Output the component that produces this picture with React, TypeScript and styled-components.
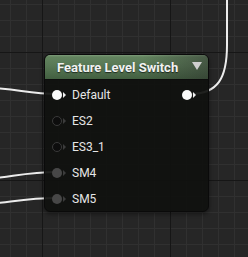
import React from "react";
import styled, { createGlobalStyle } from "styled-components";

const Global = createGlobalStyle`
  html, body { margin: 0; padding: 0; background: #262626; }
  body { font-family: Roboto, "Noto Sans", sans-serif; }
`;

const Canvas = styled.div`
  position: relative;
  width: 248px;
  height: 257px;
  overflow: hidden;
  background-color: #262626;
  background-image:
    linear-gradient(to right, #161616 1px, transparent 1px),
    linear-gradient(to bottom, #161616 1px, transparent 1px),
    linear-gradient(to right, #303030 1px, transparent 1px),
    linear-gradient(to bottom, #303030 1px, transparent 1px);
  background-size: 128px 128px, 128px 128px, 16px 16px, 16px 16px;
  background-position: 42px 0, 0 52px, 10px 0, 0 4px;
`;

const Wires = styled.svg`
  position: absolute;
  left: 0;
  top: 0;
  width: 248px;
  height: 257px;
  pointer-events: none;
`;

const Node = styled.div`
  position: absolute;
  left: 44px;
  top: 54px;
  width: 165px;
  height: 158px;
  box-sizing: border-box;
  border-radius: 6px;
  border: 1px solid #0a0a0a;
  background: rgba(16, 17, 15, 0.93);
  box-shadow: 0 2px 4px rgba(0, 0, 0, 0.45);
  overflow: hidden;
  display: flex;
  flex-direction: column;
`;

const Header = styled.div`
  height: 24px;
  flex: none;
  display: flex;
  align-items: center;
  justify-content: space-between;
  padding: 0 6px 0 12px;
  background:
    linear-gradient(to right, rgba(0,0,0,0) 60%, rgba(40,40,40,0.45) 100%),
    linear-gradient(to bottom, #7d9b79 0px, #62835e 2px, #587855 45%, #425f40 100%);
  border-bottom: 1px solid #0c0c0c;
`;

const Title = styled.span`
  color: #f2f2f2;
  font-weight: 700;
  font-size: 13px;
  text-shadow: 0 1px 1px rgba(0,0,0,0.6);
`;

const Caret = styled.span`
  width: 0;
  height: 0;
  border-left: 5px solid transparent;
  border-right: 5px solid transparent;
  border-top: 8px solid #cfcfcf;
  margin-top: -3px;
`;

const Body = styled.div`
  padding-top: 2px;
  display: flex;
  flex-direction: column;
`;

const Row = styled.div`
  height: 26px;
  display: flex;
  align-items: center;
  justify-content: space-between;
  padding: 0 12px 0 7px;
`;

const PinGroup = styled.div`
  display: flex;
  align-items: center;
`;

type PinKind = "on" | "hollow" | "gray";

const Dot = styled.span<{ $kind: PinKind }>`
  width: 10px;
  height: 10px;
  box-sizing: border-box;
  border-radius: 50%;
  background: ${p => (p.$kind === "on" ? "#fafafa" : p.$kind === "gray" ? "#474747" : "#0d0d0d")};
  border: ${p => (p.$kind === "hollow" ? "1.5px solid #3a3a3a" : "none")};
`;

const Arrow = styled.span<{ $kind: PinKind }>`
  width: 0;
  height: 0;
  margin-left: 1px;
  border-top: 3px solid transparent;
  border-bottom: 3px solid transparent;
  border-left: 3px solid ${p => (p.$kind === "on" ? "#f0f0f0" : "#3c3c3c")};
`;

const Label = styled.span`
  margin-left: 6px;
  color: #e6e6e6;
  font-size: 12px;
`;

const Pin = ({ kind }: { kind: PinKind }) => (
  <PinGroup>
    <Dot $kind={kind} />
    <Arrow $kind={kind} />
  </PinGroup>
);

const inputs: { name: string; kind: PinKind }[] = [
  { name: "Default", kind: "on" },
  { name: "ES2", kind: "hollow" },
  { name: "ES3_1", kind: "hollow" },
  { name: "SM4", kind: "gray" },
  { name: "SM5", kind: "gray" },
];

export default function App() {
  return (
    <>
      <Global />
      <Canvas>
        <Wires viewBox="0 0 248 257">
          <g fill="none" stroke="#ececec" strokeWidth="2" strokeLinecap="round">
            <path d="M -30 87 C 15 87, 25 94, 57 94" />
            <path d="M -30 181 C 15 177, 25 172, 57 172" />
            <path d="M -30 206 C 15 202, 25 198, 57 198" />
            <path d="M 190 94 C 218 94, 227 78, 227 45 L 227 -5" />
          </g>
        </Wires>
        <Node>
          <Header>
            <Title>Feature Level Switch</Title>
            <Caret />
          </Header>
          <Body>
            {inputs.map((p, i) => (
              <Row key={p.name}>
                <PinGroup>
                  <Pin kind={p.kind} />
                  <Label>{p.name}</Label>
                </PinGroup>
                {i === 0 && <Pin kind="on" />}
              </Row>
            ))}
          </Body>
        </Node>
      </Canvas>
    </>
  );
}
